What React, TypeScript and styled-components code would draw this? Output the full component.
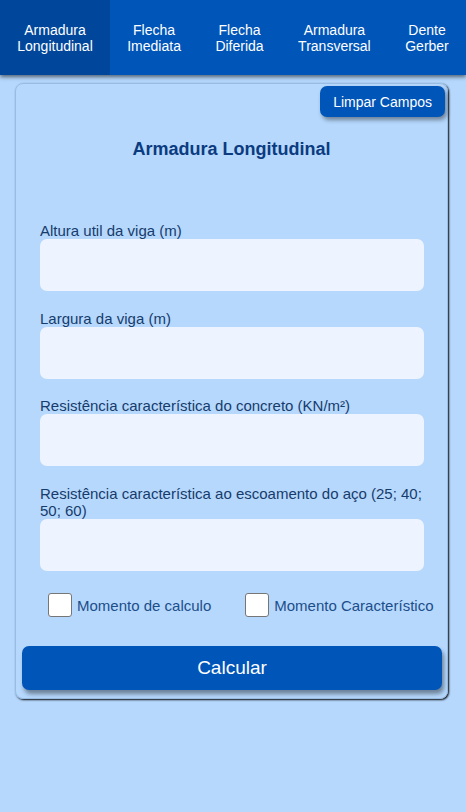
import React from "react";
import styled, { createGlobalStyle } from "styled-components";

const Global = createGlobalStyle`
  html, body {
    margin: 0;
    padding: 0;
    background: #b6d8fd;
    font-family: "Liberation Sans", Arial, sans-serif;
  }
  * { box-sizing: border-box; }
`;

const Page = styled.div`
  min-height: 812px;
  background: #b6d8fd;
  display: flex;
  flex-direction: column;
`;

const Header = styled.nav`
  display: flex;
  height: 75px;
  background: #0055b8;
  box-shadow: 0 2px 4px rgba(0, 0, 0, 0.55);
  position: relative;
  z-index: 1;
`;

const Tab = styled.div<{ $active?: boolean }>`
  flex: 1 1 auto;
  display: flex;
  align-items: center;
  justify-content: center;
  padding: 0 16px;
  text-align: center;
  color: #ffffff;
  font-size: 14px;
  line-height: 16px;
  background: ${(p) => (p.$active ? "#00479c" : "transparent")};
`;

const Card = styled.section`
  margin: 8px 18px 0 15px;
  border: 1px solid #98bce4;
  border-radius: 8px;
  box-shadow: 1px 1px 2px rgba(0, 0, 0, 0.95);
  display: flex;
  flex-direction: column;
  padding: 2px 0 8px;
`;

const ClearButton = styled.button`
  align-self: flex-end;
  margin-right: 2px;
  height: 31px;
  padding: 0 13px;
  border: none;
  border-radius: 7px;
  background: #0055b8;
  color: #ffffff;
  font-family: "Liberation Sans", Arial, sans-serif;
  font-size: 14px;
  box-shadow: 2px 3px 4px rgba(0, 0, 0, 0.4);
`;

const Title = styled.h2`
  margin: 22px 0 0;
  text-align: center;
  font-size: 18px;
  font-weight: bold;
  color: #0b3b80;
`;

const Form = styled.div`
  display: flex;
  flex-direction: column;
  gap: 18.5px;
  padding: 0 23px 0 24px;
  margin-top: 62px;
`;

const Field = styled.label`
  display: flex;
  flex-direction: column;
`;

const FieldLabel = styled.span`
  font-size: 15px;
  color: #173c6c;
`;

const Input = styled.input`
  height: 52px;
  border: none;
  border-radius: 7px;
  background: #edf4ff;
  outline: none;
`;

const Checks = styled.div`
  display: flex;
  align-items: center;
  gap: 34px;
  padding-left: 32px;
  margin-top: 22.5px;
`;

const CheckItem = styled.label`
  display: flex;
  align-items: center;
  gap: 5px;
  font-size: 15px;
  color: #1c4e8a;
`;

const Box = styled.input`
  appearance: none;
  margin: 0;
  width: 24px;
  height: 24px;
  border: 1px solid #767676;
  border-radius: 3px;
  background: #ffffff;
`;

const CalcButton = styled.button`
  margin: 29px 5px 0 6px;
  height: 44px;
  border: none;
  border-radius: 7px;
  background: #0055b8;
  color: #ffffff;
  font-family: "Liberation Sans", Arial, sans-serif;
  font-size: 19px;
  box-shadow: 2px 4px 4px rgba(0, 0, 0, 0.4);
`;

const tabs = [
  ["Armadura", "Longitudinal"],
  ["Flecha", "Imediata"],
  ["Flecha", "Diferida"],
  ["Armadura", "Transversal"],
  ["Dente", "Gerber"],
];

const fields = [
  "Altura util da viga (m)",
  "Largura da viga (m)",
  "Resistência característica do concreto (KN/m²)",
  "Resistência característica ao escoamento do aço (25; 40; 50; 60)",
];

export default function App() {
  return (
    <Page>
      <Global />
      <Header>
        {tabs.map((t, i) => (
          <Tab key={i} $active={i === 0}>
            {t[0]}
            <br />
            {t[1]}
          </Tab>
        ))}
      </Header>
      <Card>
        <ClearButton>Limpar Campos</ClearButton>
        <Title>Armadura Longitudinal</Title>
        <Form>
          {fields.map((f) => (
            <Field key={f}>
              <FieldLabel>{f}</FieldLabel>
              <Input type="text" />
            </Field>
          ))}
        </Form>
        <Checks>
          <CheckItem>
            <Box type="checkbox" />
            Momento de calculo
          </CheckItem>
          <CheckItem>
            <Box type="checkbox" />
            Momento Característico
          </CheckItem>
        </Checks>
        <CalcButton>Calcular</CalcButton>
      </Card>
    </Page>
  );
}
